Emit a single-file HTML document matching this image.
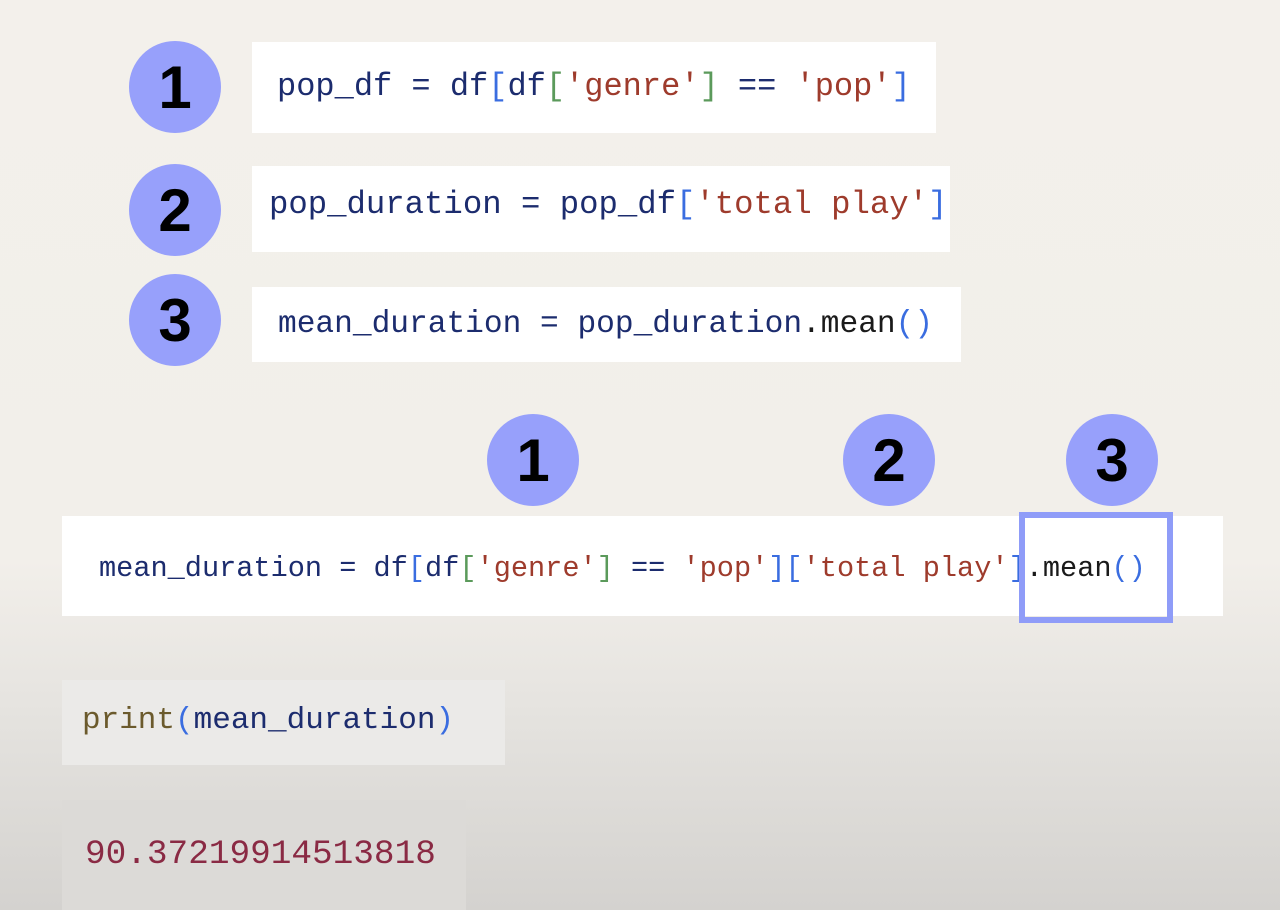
<!DOCTYPE html>
<html><head><style>
body{margin:0;width:1280px;height:910px;overflow:hidden;position:relative;
background:linear-gradient(to bottom,#f3f0eb 0px,#f2efea 560px,#e6e4e0 700px,#d4d2cf 910px);
font-family:"Liberation Mono",monospace;}
.b{position:absolute;background:#fff;}
.c{position:absolute;width:92px;height:92px;border-radius:50%;background:#97a0fb;color:#000;
font-family:"Liberation Sans",sans-serif;font-weight:bold;font-size:60px;line-height:94px;text-align:center;}
.t{position:absolute;white-space:pre;line-height:1;}
.n{color:#1c2c6e}.bl{color:#3a6de0}.g{color:#5b9a5b}.s{color:#9e3b2c}.k{color:#1a1a1a}
</style></head><body>
<div class="b" style="left:252px;top:42px;width:684px;height:91px"></div>
<div class="b" style="left:252px;top:166px;width:698px;height:86px"></div>
<div class="b" style="left:252px;top:287px;width:709px;height:75px"></div>
<div class="b" style="left:62px;top:516px;width:1161px;height:100px"></div>
<div class="b" style="left:62px;top:680px;width:443px;height:85px;background:#ebeae8"></div>
<div class="b" style="left:62px;top:800px;width:404px;height:110px;background:#dcdad7"></div>

<div class="c" style="left:129px;top:41px">1</div>
<div class="c" style="left:129px;top:164px">2</div>
<div class="c" style="left:129px;top:274px">3</div>
<div class="c" style="left:487px;top:414px">1</div>
<div class="c" style="left:843px;top:414px">2</div>
<div class="c" style="left:1066px;top:414px">3</div>

<div class="t" style="left:277px;top:71px;font-size:32px"><span class="n">pop_df = df</span><span class="bl">[</span><span class="n">df</span><span class="g">[</span><span class="s">'genre'</span><span class="g">]</span><span class="n"> == </span><span class="s">'pop'</span><span class="bl">]</span></div>
<div class="t" style="left:269px;top:189px;font-size:32.3px"><span class="n">pop_duration = pop_df</span><span class="bl">[</span><span class="s">'total play'</span><span class="bl">]</span></div>
<div class="t" style="left:278px;top:309px;font-size:31.2px"><span class="n">mean_duration = pop_duration</span><span class="k">.mean</span><span class="bl">()</span></div>
<div class="t" style="left:99px;top:555px;font-size:28.6px"><span class="n">mean_duration = df</span><span class="bl">[</span><span class="n">df</span><span class="g">[</span><span class="s">'genre'</span><span class="g">]</span><span class="n"> == </span><span class="s">'pop'</span><span class="bl">]</span><span class="bl">[</span><span class="s">'total play'</span><span class="bl">]</span><span class="k">.mean</span><span class="bl">()</span></div>
<div style="position:absolute;left:1019px;top:512px;width:142px;height:99px;border:6px solid #8f9cf8"></div>
<div class="t" style="left:82px;top:705px;font-size:31px"><span style="color:#6b5a2c">print</span><span class="bl">(</span><span class="n">mean_duration</span><span class="bl">)</span></div>
<div class="t" style="left:85px;top:838px;font-size:34.4px;color:#8a2a44">90.37219914513818</div>
</body></html>
